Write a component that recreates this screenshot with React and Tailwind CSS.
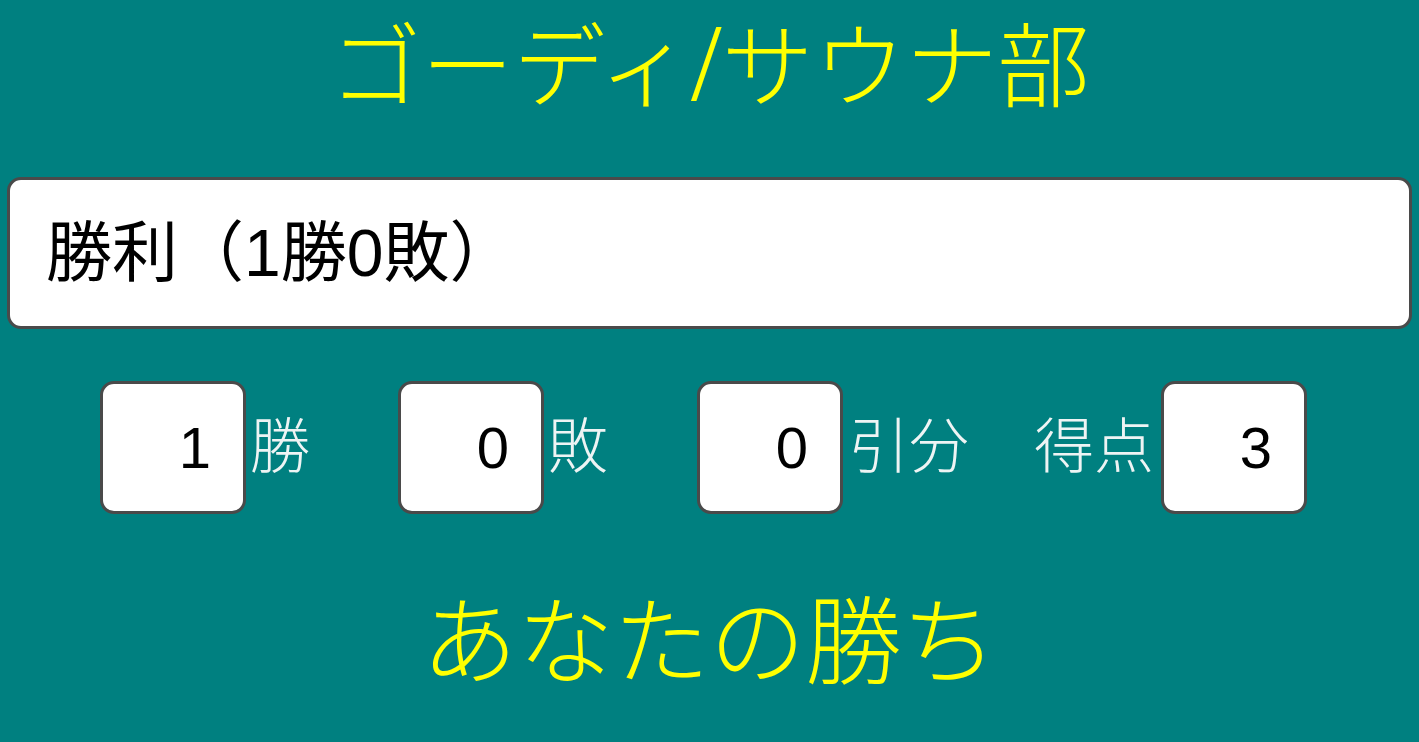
import React from "react";

const serif = "font-['Liberation_Serif','Noto_Sans_CJK_JP',serif]";
const sans = "font-['Liberation_Sans','Noto_Sans_CJK_JP',sans-serif]";

function CountBox({ value }) {
  return (
    <div className={`flex h-[133px] w-[146px] items-center justify-end rounded-[14px] border-[3px] border-[#4a4a4a] bg-white pr-[32px] text-[58px] text-black ${sans}`}>
      {value}
    </div>
  );
}

function Label({ children, className = "" }) {
  return (
    <span className={`text-[60px] font-light leading-none text-[#eef4f4] ${sans} ${className}`}>{children}</span>
  );
}

export default function App() {
  return (
    <main className="flex h-[742px] w-full flex-col overflow-hidden bg-[#008080]">
      <h1 className={`mt-[8px] text-center text-[92px] font-light leading-[110px] text-[#ffff00] ${serif}`}>
        ゴーディ<span className="text-[110px] leading-none">/</span>サウナ部
      </h1>

      <div className="mx-[7px] mt-[53px] flex h-[152px] items-center rounded-[14px] border-[3px] border-[#4a4a4a] bg-white pl-[36px]">
        <span className={`text-[66px] text-black ${sans}`}>勝利（1勝0敗）</span>
      </div>

      <div className="mt-[52px] flex items-center pl-[100px]">
        <CountBox value="1" />
        <Label className="ml-[4px]">勝</Label>
        <div className="ml-[88px]">
          <CountBox value="0" />
        </div>
        <Label className="ml-[4px]">敗</Label>
        <div className="ml-[89px]">
          <CountBox value="0" />
        </div>
        <Label className="ml-[6px]">引分</Label>
        <Label className="ml-[65px]">得点</Label>
        <div className="ml-[7px]">
          <CountBox value="3" />
        </div>
      </div>

      <p className={`mt-[75px] text-center text-[96px] font-light leading-[110px] text-[#ffff00] ${serif}`}>
        あなたの勝ち
      </p>
    </main>
  );
}
